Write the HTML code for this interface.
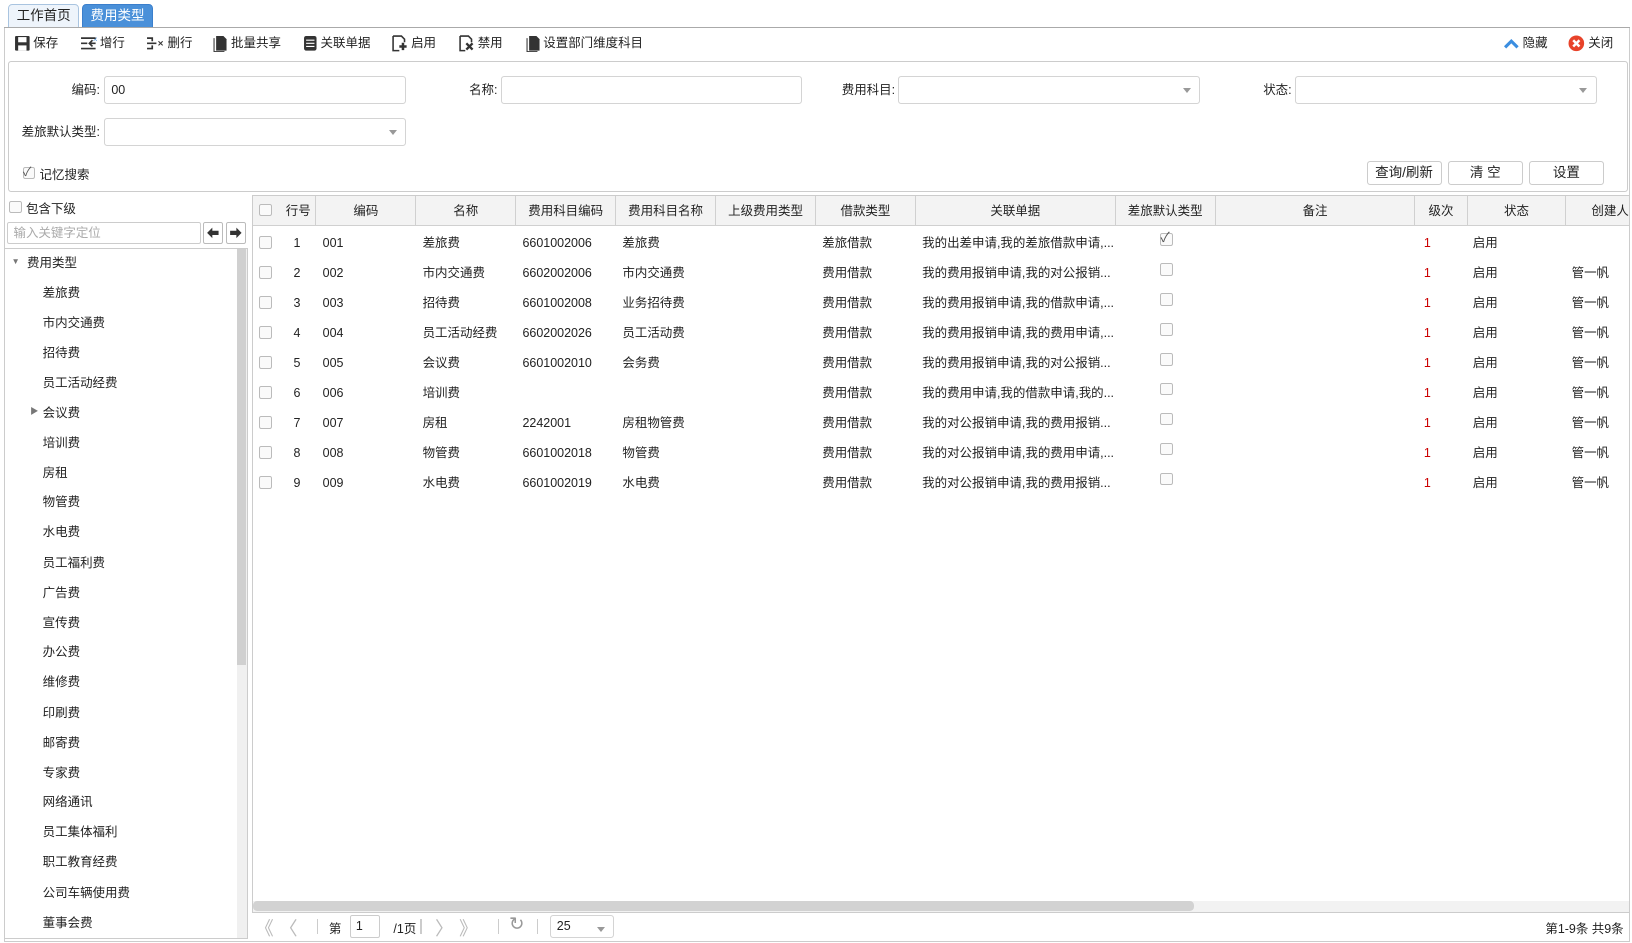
<!DOCTYPE html>
<html><head><meta charset="utf-8"><style>
*{box-sizing:border-box;margin:0;padding:0}
html,body{width:1632px;height:943px;overflow:hidden;background:#fff}
#w{position:relative;width:1568px;height:906px;zoom:1.0408;font-family:"Liberation Sans","Noto Sans CJK SC",sans-serif;font-size:12px;color:#222}
.a{position:absolute}
.tab{position:absolute;top:4px;height:22px;border:1px solid #a9c4e0;border-bottom:none;border-radius:4px 4px 0 0;line-height:22px;font-size:13px;padding-left:7px}
.tb{position:absolute;top:33px;height:18px;line-height:18px;font-size:12px;display:flex;align-items:center}
.tb svg{margin-right:3px}
.inp{position:absolute;height:27px;border:1px solid #d4d4d4;border-radius:3px;background:#fff;padding-left:6px;line-height:25px}
.dd:after{content:"";position:absolute;right:8px;top:11px;border:4px solid transparent;border-top:5px solid #999}
.lbl{position:absolute;text-align:right;line-height:27px}
.btn{position:absolute;top:155px;height:23px;width:72px;border:1px solid #ccc;border-radius:3px;background:#fff;text-align:center;line-height:21px;font-size:13px}
.cb{position:absolute;width:12px;height:12px;border:1px solid #bbb;border-radius:2px;background:#fafafa}
.ti{position:absolute;left:41px;font-size:12px}
.hd{position:absolute;top:188px;height:29px;line-height:29px;text-align:center;border-right:1px solid #d0d0d0;background:#f3f3f3;border-bottom:1px solid #d0d0d0}
.c{position:absolute;white-space:nowrap;line-height:16px}
</style></head><body><div id="w">
<div class="tab" style="left:8px;width:68px;background:#eef4fb">工作首页</div>
<div class="tab" style="left:79px;width:68px;background:#4a90d9;color:#fff;border-color:#3b7fcc">费用类型 <span style="display:inline-block;width:9px;height:9px;border-radius:50%;background:#fff;color:#4a90d9;font-size:8px;line-height:9px;text-align:center;vertical-align:1px">×</span></div>
<div class="a" style="left:4px;top:26px;width:1562px;height:1px;background:#aaa"></div>
<div class="a" style="left:4px;top:27px;width:1px;height:878px;background:#ccc"></div>
<div class="a" style="left:1565px;top:27px;width:1px;height:878px;background:#ccc"></div>

<div class="tb" style="left:13px"><svg width="16" height="16"><rect x="1" y="1" width="14" height="14" fill="#333" rx="1"/><rect x="4" y="2" width="8" height="5" fill="#fff"/><rect x="4" y="10" width="8" height="5" fill="#fff"/></svg>保存</div>
<div class="tb" style="left:77px"><svg width="16" height="16"><path d="M1 3h14M1 13h14M1 8h6M12 5l-3 3 3 3M9 8h6" stroke="#333" stroke-width="1.6" fill="none"/></svg>增行</div>
<div class="tb" style="left:140px"><svg width="18" height="16"><path d="M1 3h5v3M1 13h5v-3M1 8h9" stroke="#333" stroke-width="1.6" fill="none"/><path d="M12 6l4 4M16 6l-4 4" stroke="#333" stroke-width="1"/></svg>删行</div>
<div class="tb" style="left:205px"><svg width="14" height="16"><path d="M3 1h7l3 3v11H3z" fill="#333"/><path d="M1 3v13h10" stroke="#333" fill="none"/></svg>批量共享</div>
<div class="tb" style="left:291px"><svg width="14" height="16"><rect x="1" y="1" width="12" height="14" rx="2" fill="#333"/><path d="M3 5h8M3 8h8M3 11h8" stroke="#fff"/></svg>关联单据</div>
<div class="tb" style="left:376px"><svg width="16" height="16"><path d="M2 1h8l3 3v3M2 1v14h6" stroke="#333" stroke-width="1.5" fill="none"/><path d="M8 11h7M11.5 7.5v7" stroke="#333" stroke-width="2.4"/></svg>启用</div>
<div class="tb" style="left:440px"><svg width="16" height="16"><path d="M2 1h8l3 3v3M2 1v14h5" stroke="#333" stroke-width="1.5" fill="none"/><path d="M8 8l6 6M14 8l-6 6" stroke="#333" stroke-width="2.2"/></svg>禁用</div>
<div class="tb" style="left:505px"><svg width="14" height="16"><path d="M3 1h7l3 3v11H3z" fill="#333"/><path d="M1 3v13h10" stroke="#333" fill="none"/></svg>设置部门维度科目</div>
<div class="tb" style="left:1444px"><svg width="16" height="12"><path d="M2 10l6-6 6 6" stroke="#3b8ee0" stroke-width="3" fill="none"/></svg>隐藏</div>
<div class="tb" style="left:1507px"><svg width="16" height="16"><circle cx="8" cy="8" r="7.5" fill="#e8432a"/><path d="M5 5l6 6M11 5l-6 6" stroke="#fff" stroke-width="2.4"/></svg>关闭</div>

<div class="a" style="left:8px;top:59px;width:1556px;height:125px;border:1px solid #ccc;border-radius:3px"></div>
<div class="lbl" style="left:20px;width:76px;top:73px">编码:</div><div class="inp" style="left:100px;top:73px;width:290px">00</div>
<div class="lbl" style="left:400px;width:78px;top:73px">名称:</div><div class="inp" style="left:481px;top:73px;width:290px"></div>
<div class="lbl" style="left:780px;width:80px;top:73px">费用科目:</div><div class="inp dd" style="left:863px;top:73px;width:290px"></div>
<div class="lbl" style="left:1160px;width:81px;top:73px">状态:</div><div class="inp dd" style="left:1244px;top:73px;width:290px"></div>
<div class="lbl" style="left:10px;width:86px;top:113px">差旅默认类型:</div><div class="inp dd" style="left:100px;top:113px;width:290px"></div>
<div class="cb" style="left:22px;top:160px"></div><div class="a" style="left:22px;top:156px;font-size:12px;color:#555">✓</div><div class="a" style="left:38px;top:159px">记忆搜索</div>
<div class="btn" style="left:1313px">查询/刷新</div><div class="btn" style="left:1391px">清 空</div><div class="btn" style="left:1469px">设置</div>

<div class="cb" style="left:9px;top:193px"></div><div class="a" style="left:25px;top:191px">包含下级</div>
<div class="a" style="left:7px;top:213px;width:186px;height:21px;border:1px solid #ccc;border-radius:2px;color:#aaa;padding-left:5px;line-height:20px">输入关键字定位</div>
<div class="a" style="left:195px;top:213px;width:19px;height:21px;border:1px solid #bbb;border-radius:2px"><svg width="17" height="19" style="position:absolute;left:0;top:0"><path d="M3 9.5l5-5v3h6v4H8v3z" fill="#333"/></svg></div>
<div class="a" style="left:217px;top:213px;width:19px;height:21px;border:1px solid #bbb;border-radius:2px"><svg width="17" height="19" style="position:absolute;left:0;top:0"><path d="M14 9.5l-5-5v3H3v4h6v3z" fill="#333"/></svg></div>
<div class="a" style="left:4px;top:238px;width:234px;height:664px;border:1px solid #ccc"></div>
<div class="a" style="left:228px;top:239px;width:9px;height:662px;background:#f0f0f0"></div>
<div class="a" style="left:228px;top:239px;width:8px;height:400px;background:#d0d0d0"></div>
<div class="a" style="left:11px;top:246px;font-size:8px;color:#777">▼</div><div class="a" style="left:26px;top:243px">费用类型</div>
<div class="a" style="left:29px;top:389px;font-size:8px;color:#777">▶</div>
<div class="ti" style="top:272px">差旅费</div><div class="ti" style="top:301px">市内交通费</div><div class="ti" style="top:330px">招待费</div><div class="ti" style="top:358px">员工活动经费</div><div class="ti" style="top:387px">会议费</div><div class="ti" style="top:416px">培训费</div><div class="ti" style="top:445px">房租</div><div class="ti" style="top:473px">物管费</div><div class="ti" style="top:502px">水电费</div><div class="ti" style="top:531px">员工福利费</div><div class="ti" style="top:560px">广告费</div><div class="ti" style="top:589px">宣传费</div><div class="ti" style="top:617px">办公费</div><div class="ti" style="top:646px">维修费</div><div class="ti" style="top:675px">印刷费</div><div class="ti" style="top:704px">邮寄费</div><div class="ti" style="top:733px">专家费</div><div class="ti" style="top:761px">网络通讯</div><div class="ti" style="top:790px">员工集体福利</div><div class="ti" style="top:819px">职工教育经费</div><div class="ti" style="top:848px">公司车辆使用费</div><div class="ti" style="top:877px">董事会费</div>

<div class="a" style="left:242px;top:187px;width:1324px;height:690px;border:1px solid #ccc;overflow:hidden"></div>
<div class="hd" style="left:243px;width:27px;border-right:none"></div><div class="cb" style="left:249px;top:196px"></div>
<div class="hd" style="left:270px;width:34px">行号</div>
<div class="hd" style="left:304px;width:96px">编码</div>
<div class="hd" style="left:400px;width:96px">名称</div>
<div class="hd" style="left:496px;width:96px">费用科目编码</div>
<div class="hd" style="left:592px;width:96px">费用科目名称</div>
<div class="hd" style="left:688px;width:96px">上级费用类型</div>
<div class="hd" style="left:784px;width:96px">借款类型</div>
<div class="hd" style="left:880px;width:192px">关联单据</div>
<div class="hd" style="left:1072px;width:96px">差旅默认类型</div>
<div class="hd" style="left:1168px;width:192px">备注</div>
<div class="hd" style="left:1360px;width:50px">级次</div>
<div class="hd" style="left:1410px;width:95px">状态</div>
<div class="hd" style="left:1505px;width:60px;text-align:right;border-right:none">创建人</div>

<div id="rows"></div>
<div class="a" style="left:243px;top:866px;width:1322px;height:10px;background:#f2f2f2"></div>
<div class="a" style="left:243px;top:866px;width:904px;height:9px;background:#d2d2d2;border-radius:4px"></div>
<div class="a" style="left:242px;top:876px;width:1324px;height:1px;background:#ccc"></div>
<div class="a" style="left:245px;top:878px;font-size:18px;color:#bbb">《 〈</div>
<div class="a" style="left:305px;top:883px;width:1px;height:14px;background:#ccc"></div>
<div class="a" style="left:316px;top:883px">第</div>
<div class="a" style="left:336px;top:879px;width:29px;height:22px;border:1px solid #ccc;border-radius:2px;padding-left:5px;line-height:20px">1</div>
<div class="a" style="left:378px;top:883px">/1页</div>
<div class="a" style="left:404px;top:883px;width:1px;height:14px;background:#ccc"></div>
<div class="a" style="left:418px;top:878px;font-size:18px;color:#bbb">〉 》</div>
<div class="a" style="left:478px;top:883px;width:1px;height:14px;background:#ccc"></div>
<div class="a" style="left:489px;top:877px;font-size:18px;color:#999">↻</div>
<div class="a" style="left:516px;top:883px;width:1px;height:14px;background:#ccc"></div>
<div class="inp dd" style="left:528px;top:879px;width:62px;height:22px;line-height:20px;font-size:12px">25</div>
<div class="a" style="right:8px;top:883px">第1-9条 共9条</div>
<div class="a" style="left:4px;top:904px;width:1562px;height:1px;background:#ccc"></div>
<script>
var d=[["001","差旅费","6601002006","差旅费","差旅借款","我的出差申请,我的差旅借款申请,...",1,""],
["002","市内交通费","6602002006","市内交通费","费用借款","我的费用报销申请,我的对公报销...",0,"管一帆"],
["003","招待费","6601002008","业务招待费","费用借款","我的费用报销申请,我的借款申请,...",0,"管一帆"],
["004","员工活动经费","6602002026","员工活动费","费用借款","我的费用报销申请,我的费用申请,...",0,"管一帆"],
["005","会议费","6601002010","会务费","费用借款","我的费用报销申请,我的对公报销...",0,"管一帆"],
["006","培训费","","","费用借款","我的费用申请,我的借款申请,我的...",0,"管一帆"],
["007","房租","2242001","房租物管费","费用借款","我的对公报销申请,我的费用报销...",0,"管一帆"],
["008","物管费","6601002018","物管费","费用借款","我的对公报销申请,我的费用申请,...",0,"管一帆"],
["009","水电费","6601002019","水电费","费用借款","我的对公报销申请,我的费用报销...",0,"管一帆"]];
var h="";d.forEach(function(r,i){var t=226+i*28.8;
h+='<div class="cb" style="left:249px;top:'+(t+1)+'px"></div>';
h+='<div class="c" style="left:282px;top:'+t+'px">'+(i+1)+'</div>';
h+='<div class="c" style="left:310px;top:'+t+'px">'+r[0]+'</div>';
h+='<div class="c" style="left:406px;top:'+t+'px">'+r[1]+'</div>';
h+='<div class="c" style="left:502px;top:'+t+'px">'+r[2]+'</div>';
h+='<div class="c" style="left:598px;top:'+t+'px">'+r[3]+'</div>';
h+='<div class="c" style="left:790px;top:'+t+'px">'+r[4]+'</div>';
h+='<div class="c" style="left:886px;top:'+t+'px">'+r[5]+'</div>';
h+='<div class="cb" style="left:1115px;top:'+(t-2)+'px"></div>'+(r[6]?'<div class="c" style="left:1115px;top:'+(t-5)+'px;color:#555;font-size:13px">✓</div>':'');
h+='<div class="c" style="left:1368px;top:'+t+'px;color:#c00">1</div>';
h+='<div class="c" style="left:1415px;top:'+t+'px">启用</div>';
h+='<div class="c" style="left:1510px;top:'+t+'px">'+r[7]+'</div>';});
document.getElementById("rows").innerHTML=h;
</script>
</div></body></html>
